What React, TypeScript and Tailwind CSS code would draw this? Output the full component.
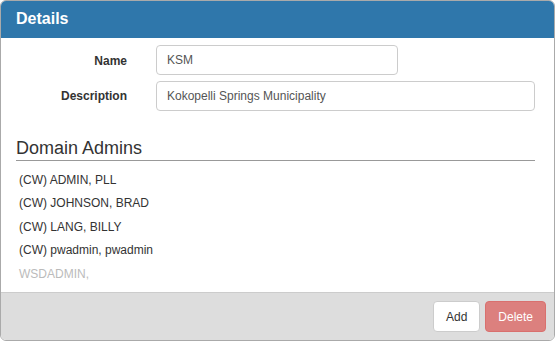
export default function App() {
  const admins = [
    "(CW) ADMIN, PLL",
    "(CW) JOHNSON, BRAD",
    "(CW) LANG, BILLY",
    "(CW) pwadmin, pwadmin",
  ];
  return (
    <div
      className="w-[555px] h-[341px] bg-white text-[#333] flex flex-col border border-[#aaa] rounded-[6px] overflow-hidden"
      style={{ fontFamily: '"Liberation Sans", Arial, sans-serif' }}
    >
      <div className="h-[38px] shrink-0 bg-[#2f77ab] text-white font-bold text-[16px] flex items-center px-[15px] -mt-px">
        Details
      </div>
      <div className="flex-1 flex flex-col px-[15px]">
        <div className="flex flex-col gap-[6px] pt-[7px]">
          <div className="flex items-center">
            <label className="w-[111px] text-right text-[12px] font-bold pt-px">Name</label>
            <div className="ml-[29px] w-[242px] h-[30px] border border-[#ccc] rounded-[4px] flex items-center px-[10px] text-[12px] text-[#555]">
              KSM
            </div>
          </div>
          <div className="flex items-center">
            <label className="w-[111px] text-right text-[12px] font-bold">Description</label>
            <div className="ml-[29px] w-[379px] h-[30px] border border-[#ccc] rounded-[4px] flex items-center px-[10px] text-[12px] text-[#555]">
              Kokopelli Springs Municipality
            </div>
          </div>
        </div>
        <div className="mt-[27px] text-[18px] leading-[20px] pb-[2px] border-b border-[#999] mr-[4px]">
          Domain Admins
        </div>
        <ul className="pt-[7px] pl-[3px] text-[12px] flex flex-col">
          {admins.map((a) => (
            <li key={a} className="h-[23.5px] flex items-center">
              {a}
            </li>
          ))}
          <li className="h-[23.5px] flex items-center text-[#bbb]">WSDADMIN,</li>
        </ul>
      </div>
      <div className="h-[48px] shrink-0 bg-[#ddd] border-t border-[#ccc] flex items-center justify-end gap-[5px] pr-[8px]">
        <button className="h-[31px] px-[12px] bg-white border border-[#ccc] rounded-[4px] text-[12px] text-[#333]">
          Add
        </button>
        <button className="h-[31px] px-[12px] bg-[#dc807e] border border-[#d9706e] rounded-[4px] text-[12px] text-white">
          Delete
        </button>
      </div>
    </div>
  );
}
